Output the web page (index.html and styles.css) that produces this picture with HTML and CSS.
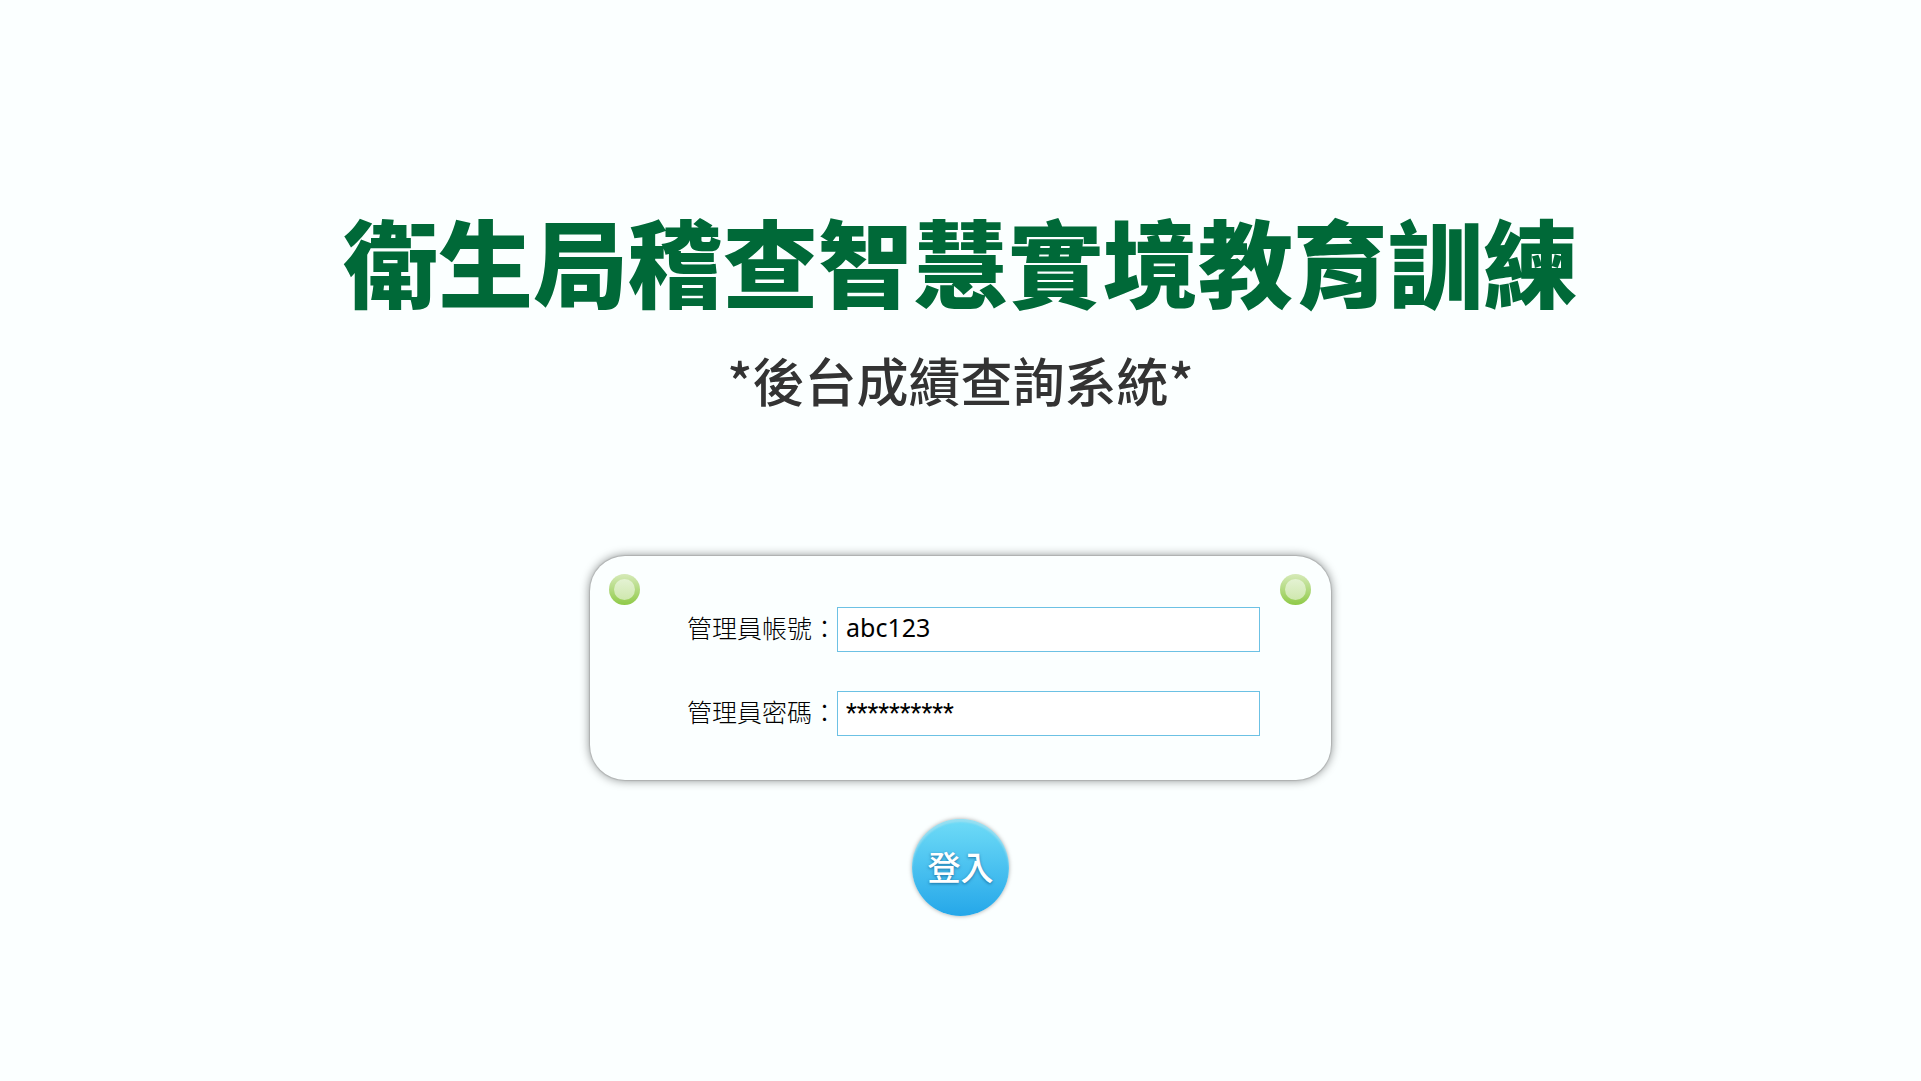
FILE: index.html
```html
<!DOCTYPE html>
<html lang="zh-Hant">
<head>
<meta charset="utf-8">
<meta name="viewport" content="width=device-width, initial-scale=1">
<title>衛生局稽查智慧實境教育訓練</title>
<link rel="stylesheet" href="styles.css">
</head>
<body>
<main class="page">
  <h1 class="title">衛生局稽查智慧實境教育訓練</h1>
  <p class="subtitle">*後台成績查詢系統*</p>
  <form class="login">
    <div class="card">
      <span class="pin"></span>
      <div class="fields">
        <div class="field">
          <label class="label" for="account">管理員帳號：</label>
          <input class="input" id="account" type="text" value="abc123">
        </div>
        <div class="field">
          <label class="label" for="password">管理員密碼：</label>
          <input class="input input-masked" id="password" type="text" value="**********" autocomplete="off">
        </div>
      </div>
      <span class="pin"></span>
    </div>
    <button class="submit" type="button">登入</button>
  </form>
</main>
</body>
</html>
```
FILE: styles.css
```css
* {
  box-sizing: border-box;
}

body {
  margin: 0;
  min-height: 100vh;
  background: #fbffff;
  color: #111;
  font-family: "Noto Sans CJK TC", sans-serif;
}

.page {
  display: flex;
  flex-direction: column;
  align-items: center;
  padding: 212px 24px 48px;
}

.title {
  margin: 0;
  color: #006938;
  font-size: 95px;
  font-weight: 900;
  line-height: 96px;
  text-align: center;
}

.subtitle {
  margin: 40px 0 0;
  color: #333;
  font-size: 52px;
  font-weight: 500;
  line-height: 64px;
  text-align: center;
}

.login {
  display: flex;
  flex-direction: column;
  align-items: center;
  gap: 39px;
  width: 100%;
  max-width: 741px;
  margin-top: 144px;
}

.card {
  display: flex;
  align-items: flex-start;
  gap: 20px;
  width: 100%;
  padding: 18px 20px 44px 19px;
  border-radius: 35px;
  background: #fbffff;
  box-shadow: 0 0 1px 1px rgba(0, 0, 0, 0.12), 0 0 10px 1px rgba(0, 0, 0, 0.4);
}

.pin {
  flex: none;
  width: 31px;
  height: 31px;
  border: 5px solid transparent;
  border-radius: 50%;
  background:
    linear-gradient(#e4f2d3, #cfe8ae) padding-box,
    linear-gradient(#d6eab9, #8fca47) border-box;
}

.fields {
  display: flex;
  flex: 1;
  flex-direction: column;
  gap: 39px;
  padding: 33px 0 0 27px;
}

.field {
  display: flex;
  align-items: center;
}

.label {
  flex: none;
  padding-bottom: 5px;
  color: #000;
  font-size: 25px;
  font-weight: 300;
  line-height: 40px;
}

.input {
  flex: 1;
  min-width: 0;
  height: 45px;
  padding: 0 8px 5px;
  border: 1px solid #6cc1e4;
  border-radius: 0;
  outline: 0;
  background: #fff;
  color: #000;
  font-family: "Noto Sans", "Noto Sans CJK TC", sans-serif;
  font-size: 25px;
}

.input-masked {
  padding-bottom: 0;
  font-family: Roboto, "Noto Sans CJK TC", sans-serif;
}

.submit {
  width: 97px;
  height: 97px;
  padding: 0 0 4px;
  border: 0;
  border-radius: 50%;
  background: linear-gradient(#6fdcf7, #25a7e9);
  box-shadow: inset 0 3px 2px rgba(170, 225, 240, 0.7), 0 0 4px rgba(0, 0, 0, 0.35);
  color: #fff;
  font-family: inherit;
  font-size: 33px;
  font-weight: 500;
  line-height: 40px;
  text-shadow: 0 1px 3px rgba(0, 60, 110, 0.6);
  cursor: pointer;
}
```
